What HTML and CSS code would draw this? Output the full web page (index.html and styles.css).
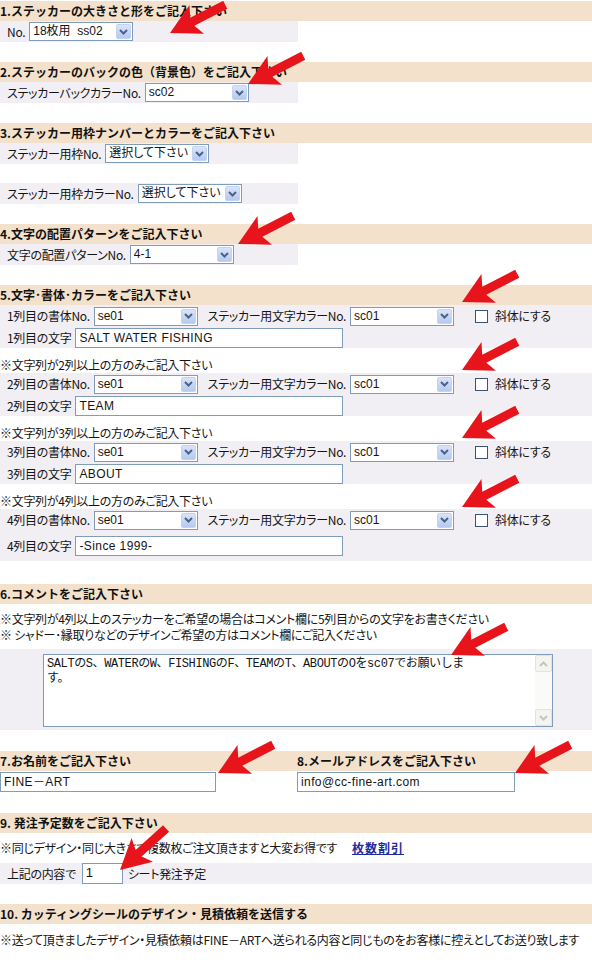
FILE: index.html
```html
<!DOCTYPE html>
<html lang="ja">
<head>
<meta charset="utf-8">
<title>カッティングシール デザイン・見積依頼</title>
<link rel="stylesheet" href="styles.css">
</head>
<body>
<div class="page">

  <section class="sec">
    <h2 class="hd">1.ステッカーの大きさと形をご記入下さい</h2>
    <div class="row half">
      <span class="lbl">No.</span>
      <span class="sel"><span class="sel-val">18枚用  ss02</span><span class="sel-btn"><svg width="9" height="6" viewBox="0 0 9 6"><path d="M1 1 L4.5 4.5 L8 1" /></svg></span></span>
    </div>
  </section>

  <section class="sec">
    <h2 class="hd">2.ステッカーのバックの色（背景色）をご記入下さい</h2>
    <div class="row half">
      <span class="lbl">ステッカーバックカラーNo.</span>
      <span class="sel"><span class="sel-val">sc02</span><span class="sel-btn"><svg width="9" height="6" viewBox="0 0 9 6"><path d="M1 1 L4.5 4.5 L8 1" /></svg></span></span>
    </div>
  </section>

  <section class="sec">
    <h2 class="hd">3.ステッカー用枠ナンバーとカラーをご記入下さい</h2>
    <div class="row half">
      <span class="lbl">ステッカー用枠No.</span>
      <span class="sel"><span class="sel-val">選択して下さい</span><span class="sel-btn"><svg width="9" height="6" viewBox="0 0 9 6"><path d="M1 1 L4.5 4.5 L8 1" /></svg></span></span>
    </div>
    <div class="spacer"></div>
    <div class="row half">
      <span class="lbl">ステッカー用枠カラーNo.</span>
      <span class="sel"><span class="sel-val">選択して下さい</span><span class="sel-btn"><svg width="9" height="6" viewBox="0 0 9 6"><path d="M1 1 L4.5 4.5 L8 1" /></svg></span></span>
    </div>
  </section>

  <section class="sec">
    <h2 class="hd">4.文字の配置パターンをご記入下さい</h2>
    <div class="row half">
      <span class="lbl">文字の配置パターンNo.</span>
      <span class="sel"><span class="sel-val">4-1</span><span class="sel-btn"><svg width="9" height="6" viewBox="0 0 9 6"><path d="M1 1 L4.5 4.5 L8 1" /></svg></span></span>
    </div>
  </section>

  <section class="sec s5">
    <h2 class="hd">5.文字･書体･カラーをご記入下さい</h2>

    <div class="row rowa">
      <span class="lbl">1列目の書体No.</span>
      <span class="sel"><span class="sel-val">se01</span><span class="sel-btn"><svg width="9" height="6" viewBox="0 0 9 6"><path d="M1 1 L4.5 4.5 L8 1" /></svg></span></span>
      <span class="lbl lbl2">ステッカー用文字カラーNo.</span>
      <span class="sel"><span class="sel-val">sc01</span><span class="sel-btn"><svg width="9" height="6" viewBox="0 0 9 6"><path d="M1 1 L4.5 4.5 L8 1" /></svg></span></span>
      <span class="chk"></span><span class="lbl">斜体にする</span>
    </div>
    <div class="row rowb">
      <span class="lbl">1列目の文字</span>
      <span class="txt w268">SALT WATER FISHING</span>
    </div>

    <p class="note">※文字列が2列以上の方のみご記入下さい</p>
    <div class="row rowa">
      <span class="lbl">2列目の書体No.</span>
      <span class="sel"><span class="sel-val">se01</span><span class="sel-btn"><svg width="9" height="6" viewBox="0 0 9 6"><path d="M1 1 L4.5 4.5 L8 1" /></svg></span></span>
      <span class="lbl lbl2">ステッカー用文字カラーNo.</span>
      <span class="sel"><span class="sel-val">sc01</span><span class="sel-btn"><svg width="9" height="6" viewBox="0 0 9 6"><path d="M1 1 L4.5 4.5 L8 1" /></svg></span></span>
      <span class="chk"></span><span class="lbl">斜体にする</span>
    </div>
    <div class="row rowb">
      <span class="lbl">2列目の文字</span>
      <span class="txt w268">TEAM</span>
    </div>

    <p class="note">※文字列が3列以上の方のみご記入下さい</p>
    <div class="row rowa">
      <span class="lbl">3列目の書体No.</span>
      <span class="sel"><span class="sel-val">se01</span><span class="sel-btn"><svg width="9" height="6" viewBox="0 0 9 6"><path d="M1 1 L4.5 4.5 L8 1" /></svg></span></span>
      <span class="lbl lbl2">ステッカー用文字カラーNo.</span>
      <span class="sel"><span class="sel-val">sc01</span><span class="sel-btn"><svg width="9" height="6" viewBox="0 0 9 6"><path d="M1 1 L4.5 4.5 L8 1" /></svg></span></span>
      <span class="chk"></span><span class="lbl">斜体にする</span>
    </div>
    <div class="row rowb">
      <span class="lbl">3列目の文字</span>
      <span class="txt w268">ABOUT</span>
    </div>

    <p class="note">※文字列が4列以上の方のみご記入下さい</p>
    <div class="row rowa">
      <span class="lbl">4列目の書体No.</span>
      <span class="sel"><span class="sel-val">se01</span><span class="sel-btn"><svg width="9" height="6" viewBox="0 0 9 6"><path d="M1 1 L4.5 4.5 L8 1" /></svg></span></span>
      <span class="lbl lbl2">ステッカー用文字カラーNo.</span>
      <span class="sel"><span class="sel-val">sc01</span><span class="sel-btn"><svg width="9" height="6" viewBox="0 0 9 6"><path d="M1 1 L4.5 4.5 L8 1" /></svg></span></span>
      <span class="chk"></span><span class="lbl">斜体にする</span>
    </div>
    <div class="row rowb tall">
      <span class="lbl">4列目の文字</span>
      <span class="txt w268">-Since 1999-</span>
    </div>
  </section>

  <section class="sec s6">
    <h2 class="hd">6.コメントをご記入下さい</h2>
    <div class="notes">
      <p>※文字列が4列以上のステッカーをご希望の場合はコメント欄に5列目からの文字をお書きください</p>
      <p>※ シャドー･縁取りなどのデザインご希望の方はコメント欄にご記入ください</p>
    </div>
    <div class="taband">
      <div class="ta">
        <div class="ta-text">SALTのS、WATERのW、FISHINGのF、TEAMのT、ABOUTのOをsc07でお願いしま<br>す。</div>
        <div class="sb">
          <span class="sb-btn"><svg width="9" height="6" viewBox="0 0 9 6"><path d="M1 5 L4.5 1.5 L8 5" /></svg></span>
          <span class="sb-track"></span>
          <span class="sb-btn"><svg width="9" height="6" viewBox="0 0 9 6"><path d="M1 1 L4.5 4.5 L8 1" /></svg></span>
        </div>
      </div>
    </div>
  </section>

  <section class="sec s7">
    <div class="pair hd">
      <h2 class="hd-cell">7.お名前をご記入下さい</h2>
      <h2 class="hd-cell">8.メールアドレスをご記入下さい</h2>
    </div>
    <div class="pair inrow">
      <span class="txt w215">FINE－ART</span>
      <span class="txt w218">info@cc-fine-art.com</span>
    </div>
  </section>

  <section class="sec">
    <h2 class="hd">9. 発注予定数をご記入下さい</h2>
    <p class="line">※同じデザイン・同じ大きさで複数枚ご注文頂きますと大変お得です<a class="link" href="#">枚数割引</a></p>
    <div class="row full">
      <span class="lbl">上記の内容で</span>
      <span class="txt w40">1</span>
      <span class="lbl">シート発注予定</span>
    </div>
  </section>

  <section class="sec">
    <h2 class="hd">10. カッティングシールのデザイン・見積依頼を送信する</h2>
    <p class="line last">※送って頂きましたデザイン・見積依頼はFINE－ARTへ送られる内容と同じものをお客様に控えとしてお送り致します</p>
  </section>

  <svg class="arrows" width="592" height="975" viewBox="0 0 592 975">
    <defs>
      <polygon id="ar" points="0,0 30,-16 25,-4.5 62,-4.5 62,4.5 25,4.5 30,16"/>
    </defs>
    <use href="#ar" transform="translate(170 33) rotate(-27)"/>
    <use href="#ar" transform="translate(248 84) rotate(-27)"/>
    <use href="#ar" transform="translate(238 244) rotate(-27)"/>
    <use href="#ar" transform="translate(462 302) rotate(-27)"/>
    <use href="#ar" transform="translate(462 370) rotate(-27)"/>
    <use href="#ar" transform="translate(462 438) rotate(-27)"/>
    <use href="#ar" transform="translate(462 507) rotate(-27)"/>
    <use href="#ar" transform="translate(451 655) rotate(-27)"/>
    <use href="#ar" transform="translate(218 773) rotate(-27)"/>
    <use href="#ar" transform="translate(515 773) rotate(-27)"/>
    <use href="#ar" transform="translate(120 870) rotate(-42)"/>
  </svg>
</div>
</body>
</html>
```

FILE: styles.css
```css
html, body {
  margin: 0;
  padding: 0;
  background: #fff;
}

body {
  font-family: "Noto Sans CJK JP", "Noto Sans", sans-serif;
  font-size: 12px;
  color: #141414;
}

p { margin: 0; }

.page {
  position: relative;
  width: 592px;
  padding-top: 1px;
  overflow: hidden;
}

.sec { margin-bottom: 20px; }
.sec.s5 { margin-bottom: 23px; }
.sec.s6 { margin-bottom: 21px; }
.sec.s7 { margin-bottom: 21px; }

.hd {
  margin: 0;
  height: 20px;
  line-height: 20px;
  background: #f3e1cc;
  font-size: 12px;
  font-weight: bold;
  color: #111;
  white-space: nowrap;
  overflow: hidden;
}

.row {
  display: flex;
  align-items: center;
  gap: 4px;
  height: 21px;
  padding-left: 7px;
  background: #f1eff3;
  font-feature-settings: "palt";
  letter-spacing: -0.3px;
  white-space: nowrap;
}
.row.half { width: 291px; }
.row.rowa { height: 22px; }
.row.rowb.tall { height: 30px; }

.spacer { height: 19px; }

.lbl { line-height: 16px; }
.lbl2 { margin-left: 6px; }

.sel {
  display: inline-flex;
  box-sizing: border-box;
  width: 104px;
  height: 19px;
  border: 1px solid #7f9db9;
  background: #fff;
  letter-spacing: 0;
}
.sel-val {
  flex: 1;
  padding-left: 3px;
  line-height: 17px;
  font-family: "Liberation Sans", "Noto Sans CJK JP", sans-serif;
  font-size: 12px;
  white-space: pre;
  overflow: hidden;
}
.sel-btn {
  display: flex;
  align-items: center;
  justify-content: center;
  width: 15px;
  margin: 1px;
  box-sizing: border-box;
  border: 1px solid #c3d3f3;
  border-radius: 2px;
  background: linear-gradient(#d9e4fb, #b6c9f0);
}
.sel-btn svg path {
  fill: none;
  stroke: #4e6287;
  stroke-width: 2;
}

.chk {
  box-sizing: border-box;
  width: 13px;
  height: 13px;
  margin-left: 17px;
  border: 1px solid #3c5470;
  background: #fff;
}
.chk + .lbl { margin-left: 3px; }

.txt {
  display: inline-block;
  box-sizing: border-box;
  height: 20px;
  line-height: 18px;
  padding: 0 3px;
  border: 1px solid #7f9db9;
  background: #fff;
  font-family: "Liberation Sans", "Noto Sans CJK JP", sans-serif;
  font-size: 12px;
  letter-spacing: 0.4px;
  white-space: nowrap;
  overflow: hidden;
}
.w268 { width: 268px; }
.w215 { width: 216px; }
.w218 { width: 218px; }
.w40 { width: 41px; height: 21px; letter-spacing: 0; font-size: 13px; margin-left: 2px; }

.note {
  height: 25px;
  box-sizing: border-box;
  padding-top: 8px;
  line-height: 17px;
  font-feature-settings: "palt";
  letter-spacing: -0.3px;
  white-space: nowrap;
}

.notes {
  padding: 7px 0 6px;
  line-height: 16px;
  font-feature-settings: "palt";
  letter-spacing: -0.3px;
  white-space: nowrap;
}

.taband {
  background: #f1eff3;
  padding: 5px 0 3px 43px;
}
.ta {
  display: flex;
  box-sizing: border-box;
  width: 510px;
  height: 73px;
  border: 1px solid #7f9db9;
  background: #fff;
}
.ta-text {
  flex: 1;
  padding: 2px 3px;
  font-family: "Liberation Mono", "Noto Sans CJK JP", monospace;
  font-size: 12px;
  letter-spacing: -0.4px;
  line-height: 15px;
}
.sb {
  display: flex;
  flex-direction: column;
  width: 17px;
  background: #fafaf8;
}
.sb-btn {
  display: flex;
  align-items: center;
  justify-content: center;
  height: 17px;
  box-sizing: border-box;
  border: 1px solid #e4e3dc;
  border-radius: 2px;
  background: #f4f4f0;
}
.sb-btn svg path {
  fill: none;
  stroke: #c6c6bd;
  stroke-width: 2;
}
.sb-track { flex: 1; }

.pair {
  display: grid;
  grid-template-columns: 297px 1fr;
}
.hd-cell {
  margin: 0;
  font-size: 12px;
  font-weight: bold;
}
.inrow {
  height: 21px;
  align-items: center;
}

.line {
  height: 30px;
  box-sizing: border-box;
  padding-top: 6px;
  line-height: 17px;
  font-feature-settings: "palt";
  letter-spacing: -0.3px;
  white-space: nowrap;
}
.line.last { padding-top: 7px; }

.link {
  margin-left: 15px;
  color: #1d2b9c;
  font-weight: bold;
  letter-spacing: 1px;
  text-decoration: underline;
}

.row.full .lbl:last-child { margin-left: 1px; }

.arrows {
  position: absolute;
  left: 0;
  top: 0;
  pointer-events: none;
}
.arrows use { fill: #e8141c; }
```
